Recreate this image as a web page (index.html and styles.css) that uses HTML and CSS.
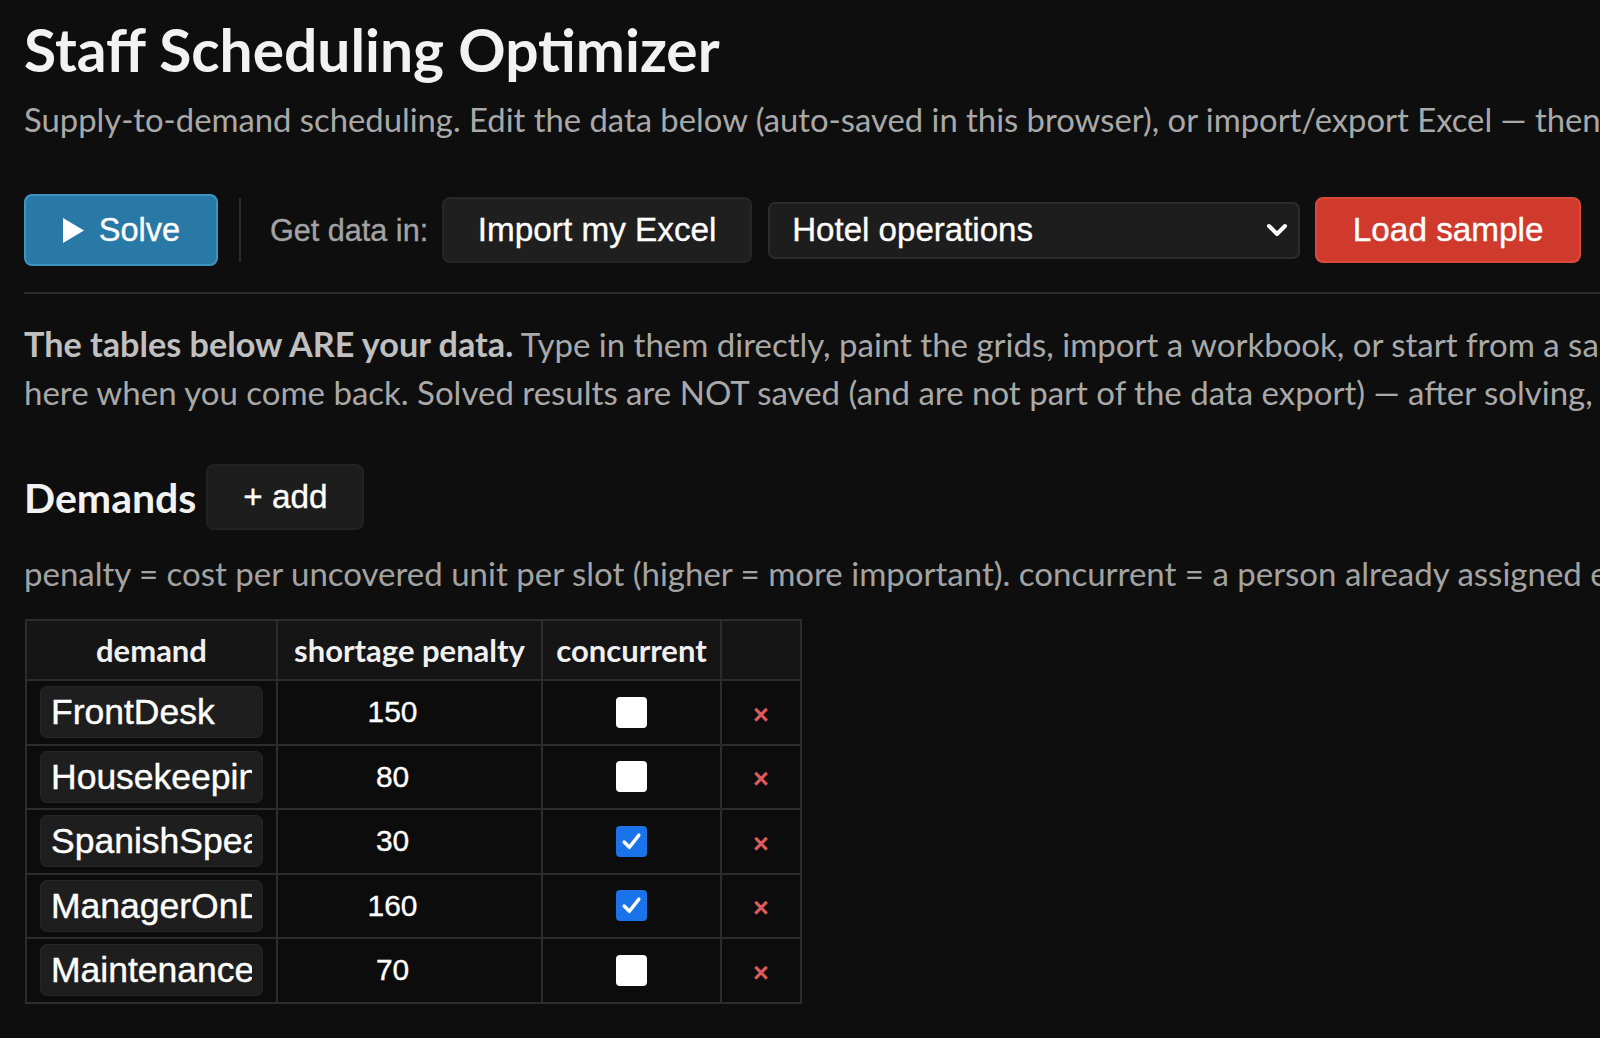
FILE: index.html
```html
<!DOCTYPE html>
<html lang="en">
<head>
<meta charset="utf-8">
<title>Staff Scheduling Optimizer</title>
<link rel="stylesheet" href="styles.css">
</head>
<body>
<div class="page">
  <h1 class="title">Staff Scheduling Optimizer</h1>
  <p class="subtitle">Supply-to-demand scheduling. Edit the data below (auto-saved in this browser), or import/export Excel — then solve.</p>

  <div class="toolbar">
    <button class="btn btn-solve"><svg class="play" width="23" height="27" viewBox="0 0 23 27"><polygon points="1,1 22,13.5 1,26" fill="#ffffff"/></svg><span>Solve</span></button>
    <span class="vsep"></span>
    <span class="label">Get data in:</span>
    <button class="btn btn-dark">Import my Excel</button>
    <div class="select">
      <span>Hotel operations</span>
      <svg class="chev" width="24" height="16" viewBox="0 0 24 16"><polyline points="4,4 12,12 20,4" fill="none" stroke="#ffffff" stroke-width="4" stroke-linecap="round" stroke-linejoin="round"/></svg>
    </div>
    <button class="btn btn-red">Load sample</button>
  </div>

  <div class="rule"></div>

  <p class="intro"><b>The tables below ARE your data.</b> Type in them directly, paint the grids, import a workbook, or start from a sample.<br>here when you come back. Solved results are NOT saved (and are not part of the data export) — after solving, use export.</p>

  <div class="section-head">
    <h2 class="h2">Demands</h2>
    <button class="btn btn-add">+ add</button>
  </div>
  <p class="note">penalty = cost per uncovered unit per slot (higher = more important). concurrent = a person already assigned elsewhere.</p>

  <table class="grid">
    <colgroup><col class="c1"><col class="c2"><col class="c3"><col class="c4"></colgroup>
    <thead>
      <tr><th>demand</th><th>shortage penalty</th><th>concurrent</th><th></th></tr>
    </thead>
    <tbody>
      <tr><td><div class="name"><span class="val">FrontDesk</span></div></td><td><div class="num">150</div></td><td><span class="cb"></span></td><td><span class="del">×</span></td></tr>
      <tr><td><div class="name"><span class="val">Housekeeping</span></div></td><td><div class="num">80</div></td><td><span class="cb"></span></td><td><span class="del">×</span></td></tr>
      <tr><td><div class="name"><span class="val">SpanishSpeaker</span></div></td><td><div class="num">30</div></td><td><span class="cb on"><svg width="23" height="23" viewBox="0 0 22 22"><polyline points="4,11.5 9,16.5 18,5" fill="none" stroke="#fff" stroke-width="3.4" stroke-linecap="round" stroke-linejoin="round"/></svg></span></td><td><span class="del">×</span></td></tr>
      <tr><td><div class="name"><span class="val">ManagerOnDuty</span></div></td><td><div class="num">160</div></td><td><span class="cb on"><svg width="23" height="23" viewBox="0 0 22 22"><polyline points="4,11.5 9,16.5 18,5" fill="none" stroke="#fff" stroke-width="3.4" stroke-linecap="round" stroke-linejoin="round"/></svg></span></td><td><span class="del">×</span></td></tr>
      <tr><td><div class="name"><span class="val">Maintenance</span></div></td><td><div class="num">70</div></td><td><span class="cb"></span></td><td><span class="del">×</span></td></tr>
    </tbody>
  </table>
</div>
</body>
</html>
```
FILE: styles.css
```css
html, body {
  margin: 0;
  padding: 0;
  background: #0e0e0e;
  overflow: hidden;
}
body {
  color: #e8e8e8;
  font-family: Lato, "Open Sans", sans-serif;
}
.page {
  width: 1900px;
  padding: 0 0 0 24px;
}
.title {
  margin: 0;
  padding-top: 14px;
  font-size: 58.7px;
  line-height: 72px;
  font-weight: 700;
  color: #f2f2f2;
}
.subtitle {
  margin: 14px 0 0;
  font-size: 32.8px;
  line-height: 40px;
  color: #a9a9a9;
  white-space: nowrap;
}
.toolbar {
  margin-top: 54px;
  display: flex;
  align-items: center;
  height: 72px;
}
.btn {
  font-family: "Liberation Sans", Arial, sans-serif;
  font-size: 33.3px;
  color: #ffffff;
  border-radius: 8px;
  cursor: pointer;
  box-sizing: border-box;
  padding: 0;
  -webkit-text-stroke: 0.35px currentColor;
}
.btn-solve {
  width: 194px;
  height: 72px;
  background: #2879a5;
  border: 2px solid #3d94c2;
  display: flex;
  align-items: center;
  justify-content: center;
  gap: 14px;
  font-size: 32.6px;
}
.vsep {
  width: 2px;
  height: 64px;
  background: #2a2a2a;
  margin: 0 29px 0 21px;
}
.label {
  font-family: "Liberation Sans", Arial, sans-serif;
  font-size: 30.6px;
  color: #a3a3a3;
  margin-right: 14px;
  -webkit-text-stroke: 0.35px currentColor;
}
.btn-dark {
  width: 310px;
  height: 66px;
  background: #1f1f1f;
  border: 2px solid #262626;
}
.select {
  margin-left: 16px;
  width: 532px;
  height: 57px;
  box-sizing: border-box;
  background: #1d1d1d;
  border: 2px solid #2c2c2c;
  border-radius: 7px;
  display: flex;
  align-items: center;
  justify-content: space-between;
  padding: 0 9px 0 22px;
  font-family: "Liberation Sans", Arial, sans-serif;
  font-size: 33.1px;
  color: #ffffff;
  -webkit-text-stroke: 0.35px currentColor;
}
.btn-red {
  margin-left: 15px;
  width: 266px;
  height: 66px;
  background: #cf3a2c;
  border: 2px solid #d6493b;
}
.rule {
  margin-top: 26px;
  width: 1900px;
  height: 2px;
  background: #2c2c2c;
}
.intro {
  margin: 26px 0 0;
  font-size: 33px;
  line-height: 48px;
  color: #a9a9a9;
  white-space: nowrap;
}
.intro b {
  font-size: 34.2px;
  color: #c0c0c0;
  font-weight: 700;
}
.section-head {
  margin-top: 48px;
  display: flex;
  align-items: center;
  gap: 10px;
  height: 66px;
}
.h2 {
  margin: 0;
  font-size: 41px;
  font-weight: 700;
  color: #f2f2f2;
}
.btn-add {
  width: 158px;
  height: 66px;
  background: #1d1d1d;
  border: 2px solid #222;
}
.note {
  margin: 21px 0 0;
  font-size: 33px;
  line-height: 44px;
  color: #a3a3a3;
  white-space: nowrap;
}
.grid {
  margin-top: 24px;
  margin-left: 1px;
  border-collapse: collapse;
  border: 2px solid #2c2c2c;
}
.c1 { width: 251px; }
.c2 { width: 265px; }
.c3 { width: 179px; }
.c4 { width: 80px; }
.grid th, .grid td {
  border: 2px solid #2c2c2c;
  padding: 0;
  text-align: center;
  vertical-align: middle;
}
.grid th {
  height: 58px;
  background: #151515;
  font-size: 31px;
  font-weight: 700;
  color: #f0f0f0;
}
.grid td {
  height: 62.5px;
  background: #0c0c0c;
}
.name {
  margin-left: 13px;
  width: 223px;
  height: 52px;
  box-sizing: border-box;
  background: #1e1e1e;
  border: 1px solid #262626;
  border-radius: 7px;
  padding: 0 10px 0 10px;
  text-align: left;
}
.val {
  display: block;
  width: 201px;
  overflow: hidden;
  white-space: nowrap;
  font-family: "Liberation Sans", Arial, sans-serif;
  font-size: 35.5px;
  line-height: 50px;
  color: #ffffff;
  -webkit-text-stroke: 0.4px currentColor;
}
.num {
  margin-left: 12px;
  width: 205px;
  font-family: "Liberation Sans", Arial, sans-serif;
  font-size: 29.9px;
  color: #ffffff;
  text-align: center;
  -webkit-text-stroke: 0.35px currentColor;
}
.cb {
  display: inline-flex;
  align-items: center;
  justify-content: center;
  width: 31px;
  height: 31px;
  box-sizing: border-box;
  background: #ffffff;
  border-radius: 4px;
  vertical-align: middle;
}
.cb.on {
  background: #1a73e8;
}
.del {
  display: inline-block;
  margin-top: 6px;
  font-family: "Liberation Sans", Arial, sans-serif;
  font-size: 27px;
  font-weight: 700;
  color: #df5b5b;
}
```
